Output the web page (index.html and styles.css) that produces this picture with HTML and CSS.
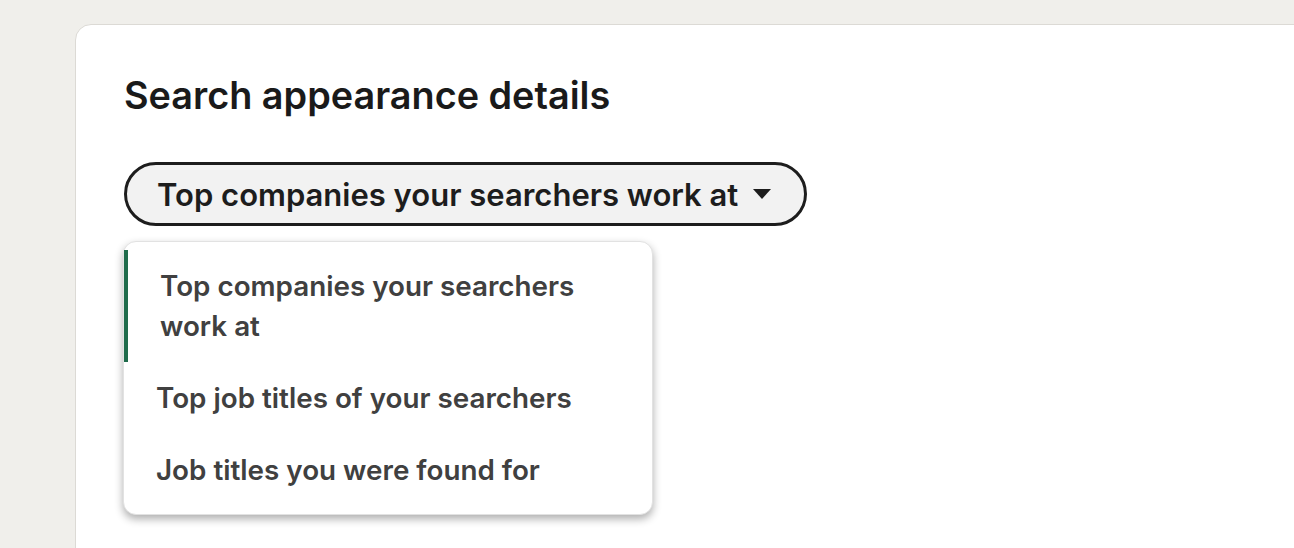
FILE: index.html
```html
<!DOCTYPE html>
<html lang="en">
<head>
<meta charset="utf-8">
<title>Search appearance details</title>
<link rel="stylesheet" href="styles.css">
</head>
<body>
<main class="card">
  <h1 class="title">Search appearance details</h1>
  <div class="picker">
    <button class="pill" type="button">
      <span>Top companies your searchers work at</span>
      <svg class="caret" width="20" height="12" viewBox="0 0 20 12" aria-hidden="true"><path d="M1 1h18l-9 10z" fill="#1d1d1d"/></svg>
    </button>
    <ul class="menu">
      <li class="item selected">Top companies your searchers work at</li>
      <li class="item">Top job titles of your searchers</li>
      <li class="item">Job titles you were found for</li>
    </ul>
  </div>
</main>
</body>
</html>
```
FILE: styles.css
```css
html, body {
  margin: 0;
  height: 100%;
  overflow: hidden;
}
body {
  background: #f0efeb;
  font-family: Inter, "Noto Sans", "Liberation Sans", sans-serif;
  padding: 24px 0 0 75px;
  box-sizing: border-box;
}
.card {
  background: #fff;
  border: 1px solid #dcdad5;
  border-radius: 16px;
  width: 1300px;
  height: 600px;
  box-sizing: border-box;
  padding: 48px 48px;
}
.title {
  margin: 0;
  font-size: 37.8px;
  line-height: 44px;
  font-weight: 600;
  color: #1a1a1a;
  letter-spacing: 0;
}
.picker {
  position: relative;
  margin-top: 45px;
}
.pill {
  display: inline-flex;
  align-items: center;
  gap: 14px;
  height: 64px;
  box-sizing: border-box;
  padding: 0 32px 0 30px;
  border: 3px solid #1d1d1d;
  border-radius: 32px;
  background: #f2f2f2;
  font-family: inherit;
  font-size: 31px;
  font-weight: 600;
  color: #1d1d1d;
  letter-spacing: 0;
}
.caret {
  display: block;
}
.menu {
  position: absolute;
  left: -1px;
  top: 79px;
  width: 530px;
  box-sizing: border-box;
  margin: 0;
  padding: 8px 0;
  list-style: none;
  background: #fff;
  border: 1px solid #e2e2e2;
  border-radius: 13px;
  box-shadow: 0 4px 8px rgba(0,0,0,0.32);
}
.item {
  padding: 16px 32px;
  font-size: 27.8px;
  line-height: 40px;
  font-weight: 600;
  color: #404040;
  letter-spacing: 0;
}
.item.selected {
  border-left: 4px solid #1f6b4b;
  padding-left: 32px;
}
```
